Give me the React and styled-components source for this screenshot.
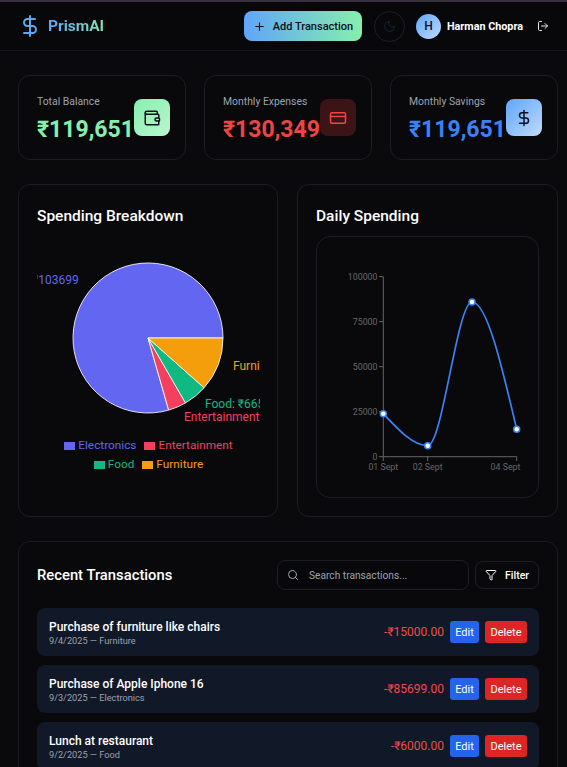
import React from "react";
import styled, { createGlobalStyle } from "styled-components";
import { DollarSign, Plus, Moon, LogOut, Wallet, CreditCard, Search, Filter } from "lucide-react";

const FONT = `Roboto, "Noto Sans", sans-serif`;

const GlobalStyle = createGlobalStyle`
  html, body {
    margin: 0;
    padding: 0;
    background: #0a0a0d;
    height: 100%;
    overflow: hidden;
  }
  * { box-sizing: border-box; }
  body {
    font-family: ${FONT};
    color: #fff;
  }
`;

const Page = styled.div`
  width: 567px;
  height: 767px;
  overflow: hidden;
  border-top: 2px solid #37303f;
`;

const Header = styled.header`
  height: 49px;
  display: flex;
  align-items: center;
  padding: 0 18px 0 18px;
  background: #08080b;
  border-bottom: 1px solid #17171b;
`;

const Logo = styled.div`
  display: flex;
  align-items: center;
  gap: 6px;
  margin-right: auto;
  color: #5ea8ee;
`;

const LogoText = styled.span`
  font-size: 15.5px;
  font-weight: 700;
  background: linear-gradient(90deg, #60a5fa, #7fe3b4);
  -webkit-background-clip: text;
  background-clip: text;
  color: transparent;
`;

const AddButton = styled.button`
  width: 118px;
  height: 30px;
  border: 0;
  border-radius: 8px;
  display: flex;
  align-items: center;
  justify-content: center;
  gap: 7px;
  white-space: nowrap;
  font-family: ${FONT};
  font-size: 11px;
  font-weight: 500;
  color: #0b1020;
  background: linear-gradient(90deg, #60a5fa, #86efac);
`;

const MoonButton = styled.div`
  width: 31px;
  height: 31px;
  margin-left: 12px;
  border-radius: 50%;
  border: 1px solid #1d1f25;
  display: flex;
  align-items: center;
  justify-content: center;
  color: #172033;
`;

const Avatar = styled.div`
  width: 25px;
  height: 25px;
  margin-left: 11px;
  border-radius: 50%;
  background: linear-gradient(135deg, #60a5fa, #bfdbfe);
  color: #0b1020;
  font-size: 12px;
  font-weight: 500;
  display: flex;
  align-items: center;
  justify-content: center;
`;

const UserName = styled.span`
  margin-left: 6px;
  font-size: 10.8px;
  font-weight: 700;
  white-space: nowrap;
`;

const LogoutIcon = styled(LogOut)`
  margin-left: 14px;
  color: #e5e7eb;
`;

const Main = styled.main`
  padding: 24px 9px 0 18px;
  display: flex;
  flex-direction: column;
  gap: 24px;
`;

const StatsRow = styled.section`
  display: grid;
  grid-template-columns: repeat(3, 168px);
  gap: 18px;
`;

const Panel = styled.div`
  background: #09090c;
  border: 1px solid #1c1d22;
  border-radius: 12px;
`;

const StatCard = styled(Panel)`
  height: 85px;
  padding: 0 15px 0 18px;
  display: flex;
  align-items: center;
  justify-content: space-between;
`;

const StatText = styled.div`
  margin-top: 4px;
`;

const StatLabel = styled.div`
  font-size: 10.4px;
  line-height: 13px;
  color: #9ca3af;
  margin-bottom: 7px;
  white-space: nowrap;
`;

const StatValue = styled.div`
  font-size: 23px;
  line-height: 30px;
  font-weight: 700;
  white-space: nowrap;
  color: ${(p) => p.$color};
`;

const StatIcon = styled.div`
  width: 36px;
  height: 37px;
  flex: none;
  border-radius: 8px;
  display: flex;
  align-items: center;
  justify-content: center;
  color: ${(p) => p.$color};
  background: ${(p) => p.$bg};
`;

const ChartsRow = styled.section`
  display: grid;
  grid-template-columns: 260px 261px;
  gap: 19px;
`;

const ChartCard = styled(Panel)`
  height: 333px;
  padding: 20px 18px;
`;

const CardTitle = styled.h2`
  margin: 0;
  font-size: 15.5px;
  line-height: 22px;
  font-weight: 500;
  color: #fff;
`;

const PieWrap = styled.div`
  margin-top: 28px;
  width: 223px;
`;

const ChartSvg = styled.svg`
  display: block;
  overflow: hidden;
`;

const Legend = styled.div`
  width: 223px;
  display: flex;
  flex-wrap: wrap;
  justify-content: center;
  column-gap: 8px;
  padding: 0 20px;
  font-size: 11.8px;
  line-height: 19px;
  margin-top: -9px;
`;

const LegendItem = styled.span`
  display: inline-flex;
  align-items: center;
  gap: 3px;
  color: ${(p) => p.$color};
  &::before {
    content: "";
    width: 11px;
    height: 8px;
    background: ${(p) => p.$color};
  }
`;

const LineBox = styled.div`
  margin-top: 9px;
  height: 262px;
  border: 1px solid #1c1d22;
  border-radius: 14px;
  overflow: hidden;
`;

const TransactionsCard = styled(Panel)`
  padding: 14px 18px 0;
  height: 240px;
`;

const ListHead = styled.div`
  display: flex;
  align-items: center;
  height: 38px;
  margin-bottom: 14px;
`;

const ListTitle = styled(CardTitle)`
  margin-right: auto;
  font-size: 14.8px;
`;

const SearchBox = styled.div`
  width: 192px;
  height: 30px;
  border: 1px solid #1e1f25;
  border-radius: 8px;
  display: flex;
  align-items: center;
  gap: 10px;
  padding: 0 9px;
  font-size: 10.2px;
  color: #9ca3af;
  background: #08080a;
`;

const FilterButton = styled.div`
  width: 64px;
  height: 28px;
  margin-left: 6px;
  border: 1px solid #1e1f25;
  border-radius: 8px;
  display: flex;
  align-items: center;
  justify-content: center;
  gap: 8px;
  font-size: 10.5px;
  font-weight: 500;
  color: #fff;
`;

const Rows = styled.div`
  display: flex;
  flex-direction: column;
  gap: 9px;
`;

const Row = styled.div`
  height: 48px;
  flex: none;
  background: #111827;
  border-radius: 8px;
  padding: 0 12px;
  display: flex;
  align-items: center;
`;

const RowInfo = styled.div`
  margin-right: auto;
  padding-top: 2px;
`;

const RowTitle = styled.div`
  font-size: 12px;
  line-height: 16px;
  font-weight: 500;
  color: #fff;
`;

const RowMeta = styled.div`
  font-size: 9.2px;
  line-height: 12px;
  color: #9ca3af;
`;

const Amount = styled.span`
  font-size: 12px;
  color: #f04b4b;
  margin-right: 6px;
`;

const ActionButton = styled.button`
  height: 22px;
  width: ${(p) => p.$width}px;
  margin-left: ${(p) => p.$gap}px;
  border: 0;
  border-radius: 3px;
  padding: 0;
  font-family: ${FONT};
  font-size: 11px;
  color: #fff;
  background: ${(p) => p.$bg};
`;

const stats = [
  { label: "Total Balance", value: "₹119,651", color: "#86efac", icon: <Wallet size={18} />, iconColor: "#0b1020", bg: "linear-gradient(135deg, #86efac, #bbf7d0)" },
  { label: "Monthly Expenses", value: "₹130,349", color: "#ef4444", icon: <CreditCard size={18} />, iconColor: "#ef4444", bg: "#3a1416" },
  { label: "Monthly Savings", value: "₹119,651", color: "#3b82f6", icon: <DollarSign size={18} />, iconColor: "#0b1020", bg: "linear-gradient(135deg, #60a5fa, #bfdbfe)" },
];

const transactions = [
  { title: "Purchase of furniture like chairs", meta: "9/4/2025 — Furniture", amount: "-₹15000.00" },
  { title: "Purchase of Apple Iphone 16", meta: "9/3/2025 — Electronics", amount: "-₹85699.00" },
  { title: "Lunch at restaurant", meta: "9/2/2025 — Food", amount: "-₹6000.00" },
];

const legend = [
  { name: "Electronics", color: "#6366f1" },
  { name: "Entertainment", color: "#f43f5e" },
  { name: "Food", color: "#10b981" },
  { name: "Furniture", color: "#f59e0b" },
];

// slice angles measured clockwise from 3 o'clock
const CX = 111;
const CY = 83;
const R = 75;
const point = (deg) => {
  const a = (deg * Math.PI) / 180;
  return `${(CX + R * Math.cos(a)).toFixed(2)} ${(CY + R * Math.sin(a)).toFixed(2)}`;
};
const slice = (from, to) =>
  `M${CX} ${CY}L${point(from)}A${R} ${R} 0 ${to - from > 180 ? 1 : 0} 1 ${point(to)}Z`;

const PieChart = () => (
  <ChartSvg width="223" height="190" viewBox="0 0 223 190">
    <g stroke="#fff" strokeOpacity="0.85" strokeWidth="1">
      <path d={slice(74, 360)} fill="#6366f1" />
      <path d={slice(60, 74)} fill="#f43f5e" />
      <path d={slice(41.6, 60)} fill="#10b981" />
      <path d={slice(0, 41.6)} fill="#f59e0b" />
    </g>
    <g fontSize="12" fontFamily="Roboto, Noto Sans, sans-serif">
      <text x="-5" y="29" fill="#6366f1">₹103699</text>
      <text x="196" y="115" fill="#f59e0b">Furniture: ₹15000</text>
      <text x="168" y="153" fill="#10b981">Food: ₹6650</text>
      <text x="147" y="166" fill="#f43f5e">Entertainment: ₹5000</text>
    </g>
  </ChartSvg>
);

const yTicks = [
  ["100000", 276.7],
  ["75000", 321.7],
  ["50000", 366.7],
  ["25000", 411.7],
  ["0", 456.7],
];
const xTicks = [
  ["01 Sept", 383.3],
  ["02 Sept", 427.7],
  ["04 Sept", 505.5],
];
const dots = [
  [383.3, 413.7],
  [427.7, 445.7],
  [472, 302],
  [516.7, 429.3],
];

const LineChart = () => (
  <ChartSvg width="221" height="260" viewBox="317 237 221 260">
    <g stroke="#666" fill="none" strokeWidth="1">
      <path d="M383.3 276.7V456.7H516.7" />
      {yTicks.map(([label, y]) => (
        <path key={label} d={`M379 ${y}H383.3`} />
      ))}
      {[383.3, 427.7, 516.7].map((x) => (
        <path key={x} d={`M${x} 456.7V461`} />
      ))}
    </g>
    <g fill="#666" fontSize="8.8" fontFamily="Roboto, Noto Sans, sans-serif">
      {yTicks.map(([label, y]) => (
        <text key={label} x="377.5" y={y + 3} textAnchor="end">{label}</text>
      ))}
      {xTicks.map(([label, x]) => (
        <text key={label} x={x} y="470" textAnchor="middle">{label}</text>
      ))}
    </g>
    <path
      d="M383.3 413.7C398.1 429.7 412.9 445.7 427.7 445.7C442.5 445.7 457.2 302 472 302C486.9 302 501.8 365.7 516.7 429.3"
      fill="none"
      stroke="#3b82f6"
      strokeWidth="1.7"
    />
    {dots.map(([x, y]) => (
      <circle key={x} cx={x} cy={y} r="3" fill="#fff" stroke="#3b82f6" strokeWidth="1.5" />
    ))}
  </ChartSvg>
);

export default function App() {
  return (
    <>
      <GlobalStyle />
      <Page>
        <Header>
          <Logo>
            <DollarSign size={24} strokeWidth={2} />
            <LogoText>PrismAI</LogoText>
          </Logo>
          <AddButton>
            <Plus size={13} />
            Add Transaction
          </AddButton>
          <MoonButton>
            <Moon size={13} />
          </MoonButton>
          <Avatar>H</Avatar>
          <UserName>Harman Chopra</UserName>
          <LogoutIcon size={12} />
        </Header>
        <Main>
          <StatsRow>
            {stats.map((s) => (
              <StatCard key={s.label}>
                <StatText>
                  <StatLabel>{s.label}</StatLabel>
                  <StatValue $color={s.color}>{s.value}</StatValue>
                </StatText>
                <StatIcon $color={s.iconColor} $bg={s.bg}>{s.icon}</StatIcon>
              </StatCard>
            ))}
          </StatsRow>
          <ChartsRow>
            <ChartCard>
              <CardTitle>Spending Breakdown</CardTitle>
              <PieWrap>
                <PieChart />
              </PieWrap>
              <Legend>
                {legend.map((l) => (
                  <LegendItem key={l.name} $color={l.color}>{l.name}</LegendItem>
                ))}
              </Legend>
            </ChartCard>
            <ChartCard>
              <CardTitle>Daily Spending</CardTitle>
              <LineBox>
                <LineChart />
              </LineBox>
            </ChartCard>
          </ChartsRow>
          <TransactionsCard>
            <ListHead>
              <ListTitle>Recent Transactions</ListTitle>
              <SearchBox>
                <Search size={12} />
                Search transactions...
              </SearchBox>
              <FilterButton>
                <Filter size={12} />
                Filter
              </FilterButton>
            </ListHead>
            <Rows>
              {transactions.map((t) => (
                <Row key={t.title}>
                  <RowInfo>
                    <RowTitle>{t.title}</RowTitle>
                    <RowMeta>{t.meta}</RowMeta>
                  </RowInfo>
                  <Amount>{t.amount}</Amount>
                  <ActionButton $width={29} $gap={0} $bg="#2563eb">Edit</ActionButton>
                  <ActionButton $width={42} $gap={6} $bg="#dc2626">Delete</ActionButton>
                </Row>
              ))}
            </Rows>
          </TransactionsCard>
        </Main>
      </Page>
    </>
  );
}
